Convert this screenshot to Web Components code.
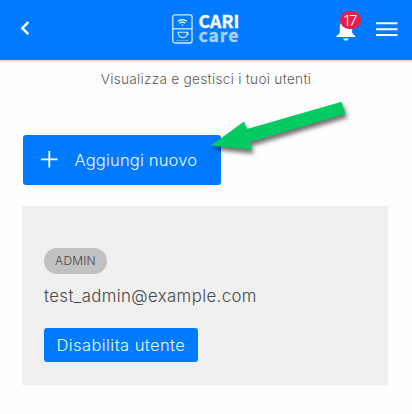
<!DOCTYPE html>
<html lang="it">
<head>
<meta charset="utf-8">
<title>CARI care</title>
<style>
html,body{margin:0;height:100%;background:#fefefe;overflow:hidden}
body{font-family:Inter,"Liberation Sans",sans-serif;font-weight:300;color:#484848}
</style>
</head>
<body>
<users-page></users-page>
<script>
function define(name, html) {
  const template = document.createElement('template');
  template.innerHTML = html;
  customElements.define(name, class extends HTMLElement {
    constructor() {
      super();
      this.attachShadow({mode: 'open'}).append(template.content.cloneNode(true));
    }
  });
}

define('brand-logo', `
<style>
:host{display:flex;align-items:flex-start;gap:6px;font-family:"Noto Sans CJK JP","Noto Sans",sans-serif;font-weight:700}
svg{display:block;margin-top:1px}
.words{display:flex;flex-direction:column;font-size:17.500px;line-height:13.500px;padding-top:1px}
.top{color:#fff;letter-spacing:.1px;-webkit-text-stroke:.35px #fff}
.bottom{color:#a9d2ff;letter-spacing:1px;-webkit-text-stroke:.35px #a9d2ff}
</style>
<svg width="21" height="30" viewBox="0 0 21 30" fill="none" stroke="#d6eaff" stroke-width="1.3">
<rect x=".8" y=".8" width="19.2" height="28.2" rx="2"/>
<path d="M1 14.800h19"/>
<path d="M5.800 7.300q4.600-3.400 9.200 0M7.600 9.300q2.800-2.200 5.600 0" stroke="#fff"/>
<circle cx="10.400" cy="11" r=".8" fill="#fff" stroke="none"/>
<path d="M6 18.300h9v1.500c0 5-7.600 5-8.600 0zM15 18.500c2 0 1.500 2.700-.8 2.700" stroke-width="1.100"/>
<path d="M3.800 26.500h13" stroke-opacity=".35" stroke-width="1"/>
</svg>
<div class="words"><span class="top">CARI</span><span class="bottom">care</span></div>`);

define('alert-bell', `
<style>
:host{display:block;position:relative;width:20px;height:20px}
svg{display:block}
.badge{position:absolute;left:4px;top:-10px;width:21px;height:18px;border-radius:9px;background:#e61e49;color:#fff;font-size:14.500px;line-height:19px;text-align:center;letter-spacing:-.2px}
</style>
<svg width="20" height="20" viewBox="0 0 20 20" fill="#fff">
<path d="M10 0c-4 0-6.200 2.500-6.200 6.200v4.300c0 2-.9 2.800-3.200 4.200V16h18.600v-1.300c-2.300-1.400-3.100-2.200-3.100-4.200V6.200C16.100 2.500 14 0 10 0zM7.300 17.400h5.200c-.3 1.500-1.200 2.200-2.600 2.200s-2.300-.7-2.600-2.200z"/>
</svg>
<span class="badge"><slot></slot></span>`);

define('top-bar', `
<style>
:host{display:grid;grid-template-columns:1fr auto 1fr;align-items:start;background:#007bff;border-bottom:2px solid #dce1e7;box-sizing:border-box;height:62px}
.back{display:block;margin:21px 0 0 20px}
brand-logo{margin:13px 1px 0 0}
.right{display:flex;justify-content:flex-end;gap:20px;padding:21px 14px 0 0}
.menu{display:block;margin-top:1px}
</style>
<svg class="back" width="10" height="15" viewBox="0 0 10 15" fill="none" stroke="#fff" stroke-width="2.500"><path d="M8.300 1.200 2.300 7.200l6 6"/></svg>
<brand-logo></brand-logo>
<div class="right"><alert-bell>17</alert-bell>
<svg class="menu" width="22" height="15" viewBox="0 0 22 15"><path d="M0 1.200h21.500M0 7.200h21.500M0 13.100h21.500" stroke="#fff" stroke-width="2"/></svg></div>`);

define('action-button', `
<style>
:host{display:inline-flex;align-items:center;box-sizing:border-box;background:#007bff;color:#f2f8ff;border-radius:3px;white-space:nowrap}
</style>
<slot name="icon"></slot><slot></slot>`);

define('user-card', `
<style>
:host{display:flex;flex-direction:column;align-items:flex-start;box-sizing:border-box;background:#f0f0f0;padding:42.500px 22.500px 23px}
.role{box-sizing:border-box;width:63px;height:26px;border-radius:13px;background:#c1c1c1;line-height:26px;text-align:center;font-size:12px;font-weight:350;letter-spacing:.2px}
.mail{margin-top:10px;height:24px;line-height:24px;font-size:16.800px;letter-spacing:.380px;white-space:nowrap;font-weight:350}
action-button{margin-top:20px;width:154px;height:34px;padding-left:12.500px;font-size:16.500px;letter-spacing:.420px}
</style>
<span class="role"><slot name="role"></slot></span>
<span class="mail"><slot name="mail"></slot></span>
<action-button><span>Disabilita utente</span></action-button>`);

define('pointer-arrow', `
<style>:host{display:block;position:absolute;left:205px;top:95px}svg{display:block;overflow:visible;filter:drop-shadow(2px 4px 2px rgba(0,0,0,.55))}</style>
<svg width="145" height="60" viewBox="205 95 145 60"><path d="M211 145.500 244 121.500l3 7.500L341.500 101.700l3.800 12L249.500 142l2.500 7.700z" fill="#02cb62"/></svg>`);

define('users-page', `
<style>
:host{display:flex;flex-direction:column;align-items:flex-start;position:relative;height:414px}
top-bar{align-self:stretch}
.intro{align-self:center;margin-top:6px;height:22px;line-height:22px;font-size:13.700px;letter-spacing:.260px;white-space:nowrap;font-weight:350;color:#5c5c5c}
.add{margin:44.500px 0 0 23px;width:198px;height:50px;padding-left:18px;font-size:16.500px;letter-spacing:.180px}
.add svg{display:block;margin-right:16.500px}
user-card{margin:21px 0 0 21.500px;width:366px;height:179.500px}
</style>
<top-bar></top-bar>
<span class="intro">Visualizza e gestisci i tuoi utenti</span>
<action-button class="add"><svg slot="icon" width="17" height="17" viewBox="0 0 17 17"><path d="M8.300 0v16.500M0 8.300h16.500" stroke="#fff" stroke-width="1.800"/></svg><span>Aggiungi nuovo</span></action-button>
<user-card><span slot="role">ADMIN</span><span slot="mail">test_admin@example.com</span></user-card>
<pointer-arrow></pointer-arrow>`);
</script>
</body>
</html>
